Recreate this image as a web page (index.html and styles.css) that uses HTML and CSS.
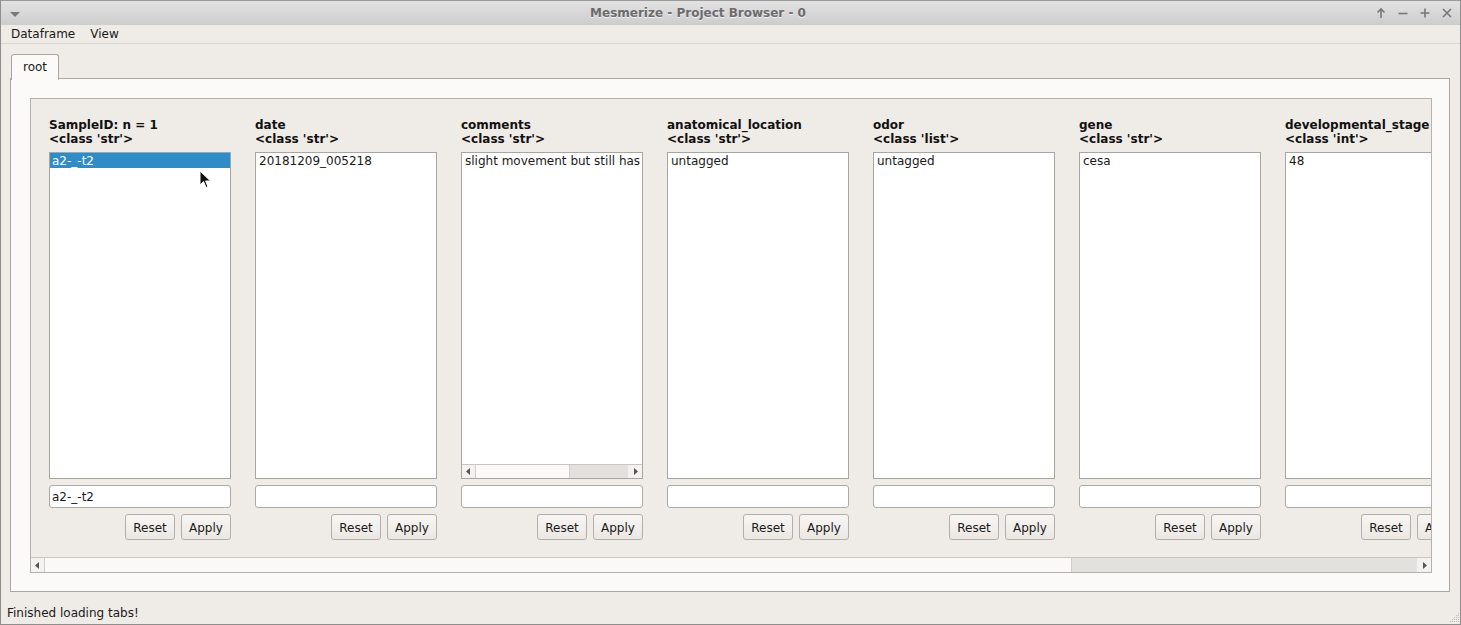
FILE: index.html
```html
<!DOCTYPE html>
<html>
<head>
<meta charset="utf-8">
<link rel="stylesheet" href="styles.css">
</head>
<body>
<div class="window">
  <div class="titlebar">
    <svg class="tb-menu" width="12" height="8" viewBox="0 0 12 8"><path d="M1 2 L11 2 L6 7 Z" fill="#777"/></svg>
    <div class="title">Mesmerize - Project Browser - 0</div>
    <div class="tb-buttons">
      <svg width="12" height="12" viewBox="0 0 12 12"><path d="M6 11 V2 M2.5 5.5 L6 2 L9.5 5.5" stroke="#777" stroke-width="1.6" fill="none"/></svg>
      <svg width="12" height="12" viewBox="0 0 12 12"><path d="M1.5 6.5 H10.5" stroke="#777" stroke-width="1.6" fill="none"/></svg>
      <svg width="12" height="12" viewBox="0 0 12 12"><path d="M1.5 6 H10.5 M6 1.5 V10.5" stroke="#777" stroke-width="1.6" fill="none"/></svg>
      <svg width="12" height="12" viewBox="0 0 12 12"><path d="M2 2 L10 10 M10 2 L2 10" stroke="#777" stroke-width="1.6" fill="none"/></svg>
    </div>
  </div>
  <div class="menubar">
    <span class="menu-item">Dataframe</span>
    <span class="menu-item">View</span>
  </div>
  <div class="central">
    <div class="tabbar"><div class="tab">root</div></div>
    <div class="pane">
      <div class="scrollarea">
        <div class="viewport">
          <div class="columns">
            <div class="col">
              <div class="hdr">SampleID: n = 1<br>&lt;class 'str'&gt;</div>
              <div class="list"><div class="item selected">a2-_-t2</div></div>
              <div class="edit">a2-_-t2</div>
              <div class="btns"><div class="btn">Reset</div><div class="btn">Apply</div></div>
            </div>
            <div class="col">
              <div class="hdr">date<br>&lt;class 'str'&gt;</div>
              <div class="list"><div class="item">20181209_005218</div></div>
              <div class="edit"></div>
              <div class="btns"><div class="btn">Reset</div><div class="btn">Apply</div></div>
            </div>
            <div class="col">
              <div class="hdr">comments<br>&lt;class 'str'&gt;</div>
              <div class="list list-h">
                <div class="list-body"><div class="item">slight movement but still has</div></div>
                <div class="sb sb-small">
                  <div class="sb-arrow"><svg width="5" height="7" viewBox="0 0 5 7"><path d="M4 0 L0 3.5 L4 7 Z" fill="#555"/></svg></div>
                  <div class="sb-handle" style="width:95px"></div>
                  <div class="sb-track"></div>
                  <div class="sb-arrow sb-arrow-r"><svg width="5" height="7" viewBox="0 0 5 7"><path d="M1 0 L5 3.5 L1 7 Z" fill="#555"/></svg></div>
                </div>
              </div>
              <div class="edit"></div>
              <div class="btns"><div class="btn">Reset</div><div class="btn">Apply</div></div>
            </div>
            <div class="col">
              <div class="hdr">anatomical_location<br>&lt;class 'str'&gt;</div>
              <div class="list"><div class="item">untagged</div></div>
              <div class="edit"></div>
              <div class="btns"><div class="btn">Reset</div><div class="btn">Apply</div></div>
            </div>
            <div class="col">
              <div class="hdr">odor<br>&lt;class 'list'&gt;</div>
              <div class="list"><div class="item">untagged</div></div>
              <div class="edit"></div>
              <div class="btns"><div class="btn">Reset</div><div class="btn">Apply</div></div>
            </div>
            <div class="col">
              <div class="hdr">gene<br>&lt;class 'str'&gt;</div>
              <div class="list"><div class="item">cesa</div></div>
              <div class="edit"></div>
              <div class="btns"><div class="btn">Reset</div><div class="btn">Apply</div></div>
            </div>
            <div class="col">
              <div class="hdr">developmental_stage<br>&lt;class 'int'&gt;</div>
              <div class="list"><div class="item">48</div></div>
              <div class="edit"></div>
              <div class="btns"><div class="btn">Reset</div><div class="btn">Apply</div></div>
            </div>
          </div>
        </div>
        <div class="sb sb-main">
          <div class="sb-arrow"><svg width="5" height="7" viewBox="0 0 5 7"><path d="M4 0 L0 3.5 L4 7 Z" fill="#555"/></svg></div>
          <div class="sb-handle" style="width:1028px"></div>
          <div class="sb-track"></div>
          <div class="sb-arrow sb-arrow-r"><svg width="5" height="7" viewBox="0 0 5 7"><path d="M1 0 L5 3.5 L1 7 Z" fill="#555"/></svg></div>
        </div>
      </div>
    </div>
  </div>
  <div class="statusbar">
    <span>Finished loading tabs!</span>
    <svg class="grip" width="12" height="12" viewBox="0 0 12 12">
      <g fill="#bbb">
        <rect x="10" y="2" width="1" height="1"/>
        <rect x="8" y="4" width="1" height="1"/><rect x="10" y="4" width="1" height="1"/>
        <rect x="6" y="6" width="1" height="1"/><rect x="8" y="6" width="1" height="1"/><rect x="10" y="6" width="1" height="1"/>
        <rect x="4" y="8" width="1" height="1"/><rect x="6" y="8" width="1" height="1"/><rect x="8" y="8" width="1" height="1"/><rect x="10" y="8" width="1" height="1"/>
        <rect x="2" y="10" width="1" height="1"/><rect x="4" y="10" width="1" height="1"/><rect x="6" y="10" width="1" height="1"/><rect x="8" y="10" width="1" height="1"/><rect x="10" y="10" width="1" height="1"/>
      </g>
    </svg>
  </div>
  <svg class="cursor" width="14" height="20" viewBox="0 0 14 20"><path d="M1 1 L1 15 L4.5 11.5 L7 17.5 L9 16.7 L6.6 11 L11.5 11 Z" fill="#111" stroke="#fff" stroke-width="1"/></svg>
</div>
</body>
</html>
```

FILE: styles.css
```css
* { box-sizing: border-box; }
html, body { margin: 0; padding: 0; }
body {
  font-family: "DejaVu Sans", "Liberation Sans", sans-serif;
  font-size: 12px;
  color: #1a1a1a;
  background: #efebe7;
}
.window {
  position: relative;
  width: 1461px;
  height: 625px;
  display: flex;
  flex-direction: column;
  background: #efebe7;
  border: 1px solid #8e8e8e;
  border-top: none;
  overflow: hidden;
}
.titlebar {
  height: 25px;
  flex: none;
  display: flex;
  align-items: center;
  background: linear-gradient(#e2e2e2, #cdcdcd);
  border-top: 1px solid #9a9a9a;
  padding: 0 8px;
}
.tb-menu { flex: none; margin-top: 1px; }
.title {
  flex: 1;
  text-align: center;
  font-weight: bold;
  font-size: 12px;
  color: #6b6b6b;
  text-shadow: 0 1px 0 #f2f2f2;
}
.tb-buttons {
  display: flex;
  gap: 10px;
  margin-right: -1px;
}
.menubar {
  height: 19px;
  flex: none;
  display: flex;
  align-items: center;
  padding-left: 10px;
  gap: 15px;
  border-bottom: 1px solid #d9d5d0;
}
.menu-item { color: #1a1a1a; }
.central {
  flex: none;
  padding: 10px 10px 0 9px;
  display: flex;
  flex-direction: column;
}
.tabbar { display: flex; padding-left: 1px; height: 25px; position: relative; z-index: 1; }
.tab {
  width: 48px;
  height: 26px;
  border: 1px solid #aaa7a3;
  border-bottom: none;
  border-radius: 3px 3px 0 0;
  background: #fcfaf8;
  text-align: center;
  line-height: 24px;
}
.pane {
  height: 514px;
  border: 1px solid #aaa7a3;
  background: #fcfaf8;
  padding: 19px 18px 18px 19px;
  margin-top: -1px;
}
.scrollarea {
  width: 1402px;
  height: 475px;
  border: 1px solid #b5b1ac;
  background: #efebe7;
  display: flex;
  flex-direction: column;
}
.viewport {
  flex: 1;
  overflow: hidden;
}
.columns {
  display: flex;
  gap: 24px;
  padding: 19px 0 0 18px;
}
.col {
  width: 182px;
  flex: none;
  display: flex;
  flex-direction: column;
}
.hdr {
  font-weight: bold;
  line-height: 14px;
  white-space: nowrap;
  height: 28px;
  color: #111;
}
.list {
  margin-top: 6px;
  height: 327px;
  border: 1px solid #a9a6a2;
  background: #fff;
  padding: 0;
  overflow: hidden;
}
.list-h { display: flex; flex-direction: column; }
.list-body { flex: 1; overflow: hidden; }
.item {
  height: 15px;
  line-height: 16px;
  padding-left: 3px;
  white-space: nowrap;
}
.item.selected {
  background: #308cc6;
  color: #fff;
  padding-left: 2px;
}
.edit {
  margin-top: 6px;
  height: 23px;
  border: 1px solid #aeaaa6;
  border-radius: 3px;
  background: #fff;
  line-height: 22px;
  padding-left: 2px;
}
.btns {
  margin-top: 6px;
  display: flex;
  justify-content: flex-end;
  gap: 6px;
}
.btn {
  width: 50px;
  height: 26px;
  border: 1px solid #b2aea9;
  border-radius: 3px;
  background: linear-gradient(#f7f5f3, #ebe8e4);
  text-align: center;
  line-height: 26px;
}
.sb {
  display: flex;
  flex: none;
  height: 15px;
  border-top: 1px solid #c9c6c2;
  background: #e3e1de;
}
.sb-small { height: 14px; }
.sb-arrow {
  width: 13px;
  flex: none;
  display: flex;
  align-items: center;
  justify-content: center;
  background: #f4f2f0;
}
.sb-arrow-r { width: 14px; }
.sb-handle {
  flex: none;
  background: #faf9f8;
  border-left: 1px solid #d1cecb;
  border-right: 1px solid #d1cecb;
}
.sb-track { flex: 1; background: #e3e1de; }
.statusbar {
  flex: 1;
  display: flex;
  align-items: flex-end;
  justify-content: space-between;
  padding: 0 0 4px 6px;
  position: relative;
}
.statusbar span { line-height: 14px; }
.grip { margin-bottom: -3px; }
.cursor {
  position: absolute;
  left: 198px;
  top: 170px;
}
```
